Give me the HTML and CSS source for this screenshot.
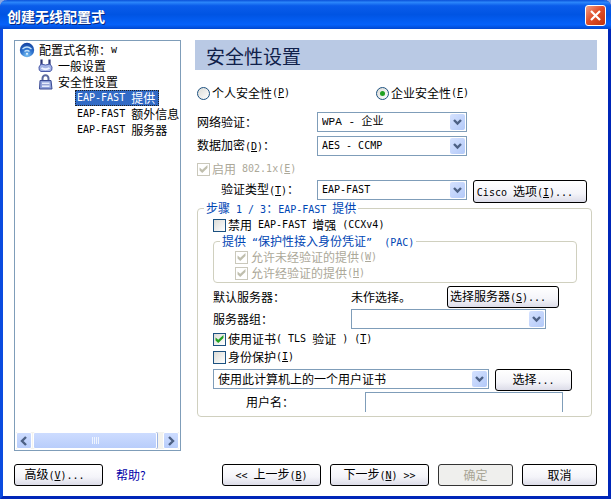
FILE: index.html
```html
<!DOCTYPE html>
<html lang="zh-CN">
<head>
  <meta charset="UTF-8">
  <meta name="viewport" content="width=device-width, initial-scale=1.0">
  <title>创建无线配置式</title>
  <link rel="stylesheet" href="styles.css">
</head>
<body>
  <svg width="0" height="0" class="defs">
    <symbol id="arrow-down" viewBox="0 0 15 16">
      <path d="M4 6l3.500 3.500L11 6" fill="none" stroke="#4d6185" stroke-width="2.400"/>
    </symbol>
  </svg>

  <div class="window">
    <header class="titlebar">
      <h1>创建无线配置式</h1>
      <button type="button" class="close" aria-label="关闭">
        <svg width="19" height="19" viewBox="0 0 19 19"><path d="M5 5l9 9M14 5l-9 9" stroke="#fff" stroke-width="2.200"/></svg>
      </button>
    </header>

    <div class="main">
      <nav class="tree">
        <ul>
          <li>
            <a href="#profile">
              <svg width="16" height="16" viewBox="0 0 16 16">
                <defs><radialGradient id="ball" cx=".5" cy=".85" r=".8"><stop offset="0" stop-color="#7cc4f4"/><stop offset=".5" stop-color="#2f74cf"/><stop offset="1" stop-color="#1747a4"/></radialGradient></defs>
                <circle cx="8" cy="8" r="7.200" fill="url(#ball)"/>
                <path d="M3.500 7q4.500-4 9 0M5.500 9.500q2.500-2 5 0" fill="none" stroke="#c4e2fa" stroke-width="1.300"/>
                <circle cx="8" cy="11.700" r="1" fill="#e8f5ff"/>
              </svg>
              配置式名称：<span class="en">w</span>
            </a>
            <ul>
              <li>
                <a href="#general">
                  <svg width="16" height="16" viewBox="0 0 16 16">
                    <path d="M3.500 1.500v6M11.500 1.500v6" stroke="#2a3474" stroke-width="2.200"/>
                    <path d="M3 6q4.500 2 9 0l2 3q.5 4-2 4.500H3Q.5 13 1 9z" fill="#a5b4e6" stroke="#4a5aa8"/>
                    <path d="M3.500 10q4 2.500 8 0" fill="none" stroke="#eef2ff" stroke-width="2"/>
                  </svg>
                  一般设置
                </a>
              </li>
              <li>
                <a href="#security">
                  <svg width="16" height="16" viewBox="0 0 16 16">
                    <path d="M4.500 7V4.500a3 3.200 0 0 1 6 0V7" fill="none" stroke="#5a689e" stroke-width="2"/>
                    <path d="M2 6.500h11l1 8.500H1.500z" fill="#8d9fd8" stroke="#3b4b94"/>
                    <path d="M4 8.500h7.500v4.500h-7.500z" fill="#e6ecfc"/>
                    <path d="M4 10.800h7.500" stroke="#7485c4"/>
                  </svg>
                  安全性设置
                </a>
                <ul class="steps">
                  <li><a href="#step1" class="selected"><span class="en">EAP-FAST </span>提供</a></li>
                  <li><a href="#step2"><span class="en">EAP-FAST </span>额外信息</a></li>
                  <li><a href="#step3"><span class="en">EAP-FAST </span>服务器</a></li>
                </ul>
              </li>
            </ul>
          </li>
        </ul>
        <div class="scrollbar">
          <button type="button" aria-label="向左"><svg width="14" height="14" viewBox="0 0 14 14"><path d="M9 3L5 7l4 4" fill="none" stroke="#4d6185" stroke-width="2.400"/></svg></button>
          <div class="thumb"><i></i><i></i><i></i><i></i></div>
          <button type="button" aria-label="向右"><svg width="14" height="14" viewBox="0 0 14 14"><path d="M5 3l4 4-4 4" fill="none" stroke="#4d6185" stroke-width="2.400"/></svg></button>
        </div>
      </nav>

      <form class="panel" id="security">
        <h2>安全性设置</h2>
        <div class="settings">
          <div class="radios">
            <label class="check"><input type="radio" name="mode">个人安全性<span class="en">(<u>P</u>)</span></label>
            <label class="check"><input type="radio" name="mode" checked>企业安全性<span class="en">(<u>F</u>)</span></label>
          </div>
          <div class="row">
            <label for="auth">网络验证：</label>
            <div class="combo">
              <select id="auth" class="mixed"><option>WPA - 企业</option></select>
              <svg><use href="#arrow-down"/></svg>
            </div>
          </div>
          <div class="row">
            <label for="cipher">数据加密<span class="en">(<u>D</u>)</span>：</label>
            <div class="combo">
              <select id="cipher" class="latin"><option>AES - CCMP</option></select>
              <svg><use href="#arrow-down"/></svg>
            </div>
          </div>
          <label class="check disabled enable"><input type="checkbox" checked disabled>启用<span class="en"> 802.1x(<u>E</u>)</span></label>
          <div class="row">
            <label for="eap" class="indent">验证类型<span class="en">(<u>T</u>)</span>：</label>
            <div class="combo">
              <select id="eap" class="latin"><option>EAP-FAST</option></select>
              <svg><use href="#arrow-down"/></svg>
            </div>
            <button type="button" class="btn cisco"><span class="en">Cisco </span>选项<span class="en">(<u>I</u>)...</span></button>
          </div>

          <fieldset class="step">
            <legend>步骤<span class="en"> 1 / 3</span>：<span class="en">EAP-FAST </span>提供</legend>
            <label class="check"><input type="checkbox">禁用<span class="en"> EAP-FAST </span>增强<span class="en"> (CCXv4)</span></label>
            <fieldset class="pac">
              <legend>提供<span class="en"> “</span>保护性接入身份凭证<span class="en">”  (PAC)</span></legend>
              <label class="check disabled"><input type="checkbox" checked disabled>允许未经验证的提供<span class="en">(<u>W</u>)</span></label>
              <label class="check disabled"><input type="checkbox" checked disabled>允许经验证的提供<span class="en">(<u>H</u>)</span></label>
            </fieldset>
            <div class="server">
              <span>默认服务器：</span>
              <span>未作选择。</span>
              <button type="button" class="btn">选择服务器<span class="en">(<u>S</u>)...</span></button>
            </div>
            <div class="server group">
              <label for="group">服务器组：</label>
              <div class="combo">
                <select id="group"><option></option></select>
                <svg><use href="#arrow-down"/></svg>
              </div>
            </div>
            <label class="check cert"><input type="checkbox" checked>使用证书<span class="en">( TLS </span>验证<span class="en"> ) (<u>T</u>)</span></label>
            <label class="check cert"><input type="checkbox">身份保护<span class="en">(<u>I</u>)</span></label>
            <div class="usercert">
              <div class="combo">
                <select aria-label="证书"><option>使用此计算机上的一个用户证书</option></select>
                <svg><use href="#arrow-down"/></svg>
              </div>
              <button type="button" class="btn">选择<span class="en">...</span></button>
            </div>
            <div class="username">
              <label for="user">用户名：</label>
              <input type="text" id="user">
            </div>
          </fieldset>
        </div>
      </form>
    </div>

    <footer>
      <button type="button" class="btn advanced">高级<span class="en">(<u>V</u>)...</span></button>
      <a href="#help" class="help">帮助?</a>
      <button type="button" class="btn wide"><span class="en">&lt;&lt; </span>上一步<span class="en">(<u>B</u>)</span></button>
      <button type="button" class="btn wide">下一步<span class="en">(<u>N</u>) &gt;&gt;</span></button>
      <button type="button" class="btn" disabled>确定</button>
      <button type="button" class="btn">取消</button>
    </footer>
  </div>
</body>
</html>
```
FILE: styles.css
```css
* {
  box-sizing: border-box;
}
body {
  margin: 0;
  background-color: #8aa6e0;
  font-family: "Noto Sans CJK SC", sans-serif;
  font-size: 12px;
  line-height: 14px;
  color: #000;
}
.defs {
  position: absolute;
}
button, input, select {
  font: inherit;
  color: inherit;
  margin: 0;
  padding: 0;
}
/* half-width characters, 6px each */
.en {
  font-family: "DejaVu Sans Mono", monospace;
  font-size: 10px;
  white-space: pre;
}
u {
  text-underline-offset: 1px;
}

.window {
  display: flex;
  flex-direction: column;
  min-height: 100vh;
  background-color: #fff;
  border: 3px solid #0026b8;
  border-left-color: #0b4be0;
  border-top: 0;
  border-radius: 7px 7px 0 0;
}
.titlebar {
  display: flex;
  align-items: center;
  justify-content: space-between;
  height: 29px;
  margin: 0 -3px;
  padding: 2px 5px 0 7px;
  border-radius: 7px 7px 0 0;
  background: linear-gradient(#0a50d8 0%, #2b86fa 8%, #0a5cea 20%, #0054e3 50%, #0562fa 85%, #0148d0 100%);
}
.titlebar h1 {
  margin: 0;
  font-size: 14px;
  line-height: 20px;
  color: #fff;
  text-shadow: 1px 1px #0a2a80;
}
.close {
  width: 21px;
  height: 21px;
  border: 1px solid #fff;
  border-radius: 3px;
  background: linear-gradient(135deg, #f0a088, #e0502c 45%, #c0330c);
}
.close svg {
  display: block;
}

.main {
  display: flex;
  flex: 1;
  gap: 14px;
  padding: 11px 11px 0;
}
.tree {
  display: flex;
  flex-direction: column;
  flex: 0 0 167px;
  border: 1px solid #7f9db9;
  padding: 1px;
  overflow: hidden;
}
.tree ul {
  list-style: none;
  margin: 0;
  padding: 0;
}
.tree > ul {
  flex: 1;
  padding-left: 3px;
}
.tree ul ul {
  padding-left: 19px;
}
.tree ul .steps {
  padding-left: 38px;
}
.steps li {
  margin-left: -1px;
}
.tree a {
  display: flex;
  align-items: center;
  width: max-content;
  height: 16px;
  color: #000;
  text-decoration: none;
}
.tree svg {
  margin-right: 4px;
}
.steps a {
  padding: 0 2px;
}
.tree .selected {
  padding-right: 4px;
  background-color: #316ac5;
  color: #fff;
  outline: 1px dotted #222;
  outline-offset: -1px;
}
.scrollbar {
  display: flex;
  gap: 1px;
  height: 17px;
  background-color: #f4f3ee;
}
.scrollbar button, .thumb {
  border: 1px solid #fff;
  border-radius: 2px;
  background: linear-gradient(#cddcff, #b8cdfb);
}
.scrollbar button {
  width: 16px;
}
.scrollbar svg {
  display: block;
}
.thumb {
  display: flex;
  flex: 1;
  align-items: center;
  justify-content: center;
  gap: 1px;
  margin-right: 5px;
  box-shadow: 1px 0 #9db5e4;
}
.thumb i {
  width: 1px;
  height: 7px;
  background-color: #eef4fe;
}

.panel {
  flex: 1;
}
.panel h2 {
  margin: 0;
  padding-left: 11px;
  height: 30px;
  background-color: #b9c9e4;
  font-size: 19px;
  font-weight: normal;
  line-height: 32px;
  color: #10204a;
}
.settings {
  padding: 16px 5px 0 2px;
}
.radios {
  display: grid;
  grid-template-columns: 179px 1fr;
  margin-bottom: 12px;
}
.check {
  display: flex;
  align-items: center;
  height: 14px;
}
.check input {
  appearance: none;
  display: flex;
  align-items: center;
  justify-content: center;
  width: 13px;
  height: 13px;
  margin-right: 2px;
  border: 1px solid #1c5180;
  background: linear-gradient(135deg, #dcdcd7, #fff);
}
.check input[type="radio"] {
  border-radius: 50%;
}
.check input[type="radio"]:checked::before {
  content: "";
  width: 5px;
  height: 5px;
  border-radius: 50%;
  background-color: #21a121;
}
.check input[type="checkbox"]:checked::before {
  content: "";
  width: 9px;
  height: 8px;
  background-color: #21a121;
  clip-path: polygon(6% 30%, 36% 60%, 94% 0, 94% 38%, 36% 100%, 6% 70%);
}
.check input:disabled {
  border-color: #cac8bb;
  background: #fff;
}
.check input[type="checkbox"]:disabled::before {
  background-color: #c0bfae;
}
.disabled {
  color: #aca899;
}
.row {
  display: flex;
  align-items: center;
  height: 20px;
  margin-bottom: 4px;
}
.row label {
  width: 120px;
}
.row .indent {
  padding-left: 24px;
}
.row .combo {
  width: 150px;
}
.enable {
  margin: 6px 0 4px;
}
.row:has(.cisco) {
  margin-bottom: 1px;
}
.combo {
  position: relative;
  height: 20px;
}
.combo select {
  appearance: none;
  display: block;
  width: 100%;
  height: 20px;
  padding: 0 20px 0 4px;
  border: 1px solid #7f9db9;
  border-radius: 0;
  background-color: #fff;
}
.combo .latin {
  font-family: "DejaVu Sans Mono", monospace;
  font-size: 10px;
}
.combo .mixed {
  font-family: "Liberation Mono", "Noto Sans CJK SC", monospace;
  font-size: 11px;
}
.combo svg {
  position: absolute;
  top: 2px;
  right: 2px;
  width: 15px;
  height: 16px;
  border-radius: 2px;
  background: linear-gradient(135deg, #d5e2ff, #b3c9f8);
  pointer-events: none;
}
.btn {
  width: 75px;
  height: 22px;
  border: 1px solid #000;
  border-radius: 3px;
  background: linear-gradient(#fff, #f4f4f9 60%, #dcdce8);
  white-space: nowrap;
}
.btn:disabled {
  border-color: #333;
  background: #efefed;
  color: #a8a596;
}
.cisco {
  align-self: flex-start;
  width: 114px;
  height: 23px;
  margin-left: 6px;
  padding-right: 10px;
}

fieldset {
  margin: 0;
  border: 1px solid #d0d0bf;
  border-radius: 4px;
}
legend {
  padding: 0 2px;
  height: 14px;
  color: #0046b4;
}
.step {
  padding: 3px 14px 4px 15px;
}
.step > legend {
  margin-left: -9px;
}
.pac {
  margin-top: 2px;
  padding: 2px 0 2px 21px;
}
.pac > legend {
  margin-left: -15px;
}
.pac .check + .check {
  margin-top: 2px;
}
.pac .check input {
  margin-right: 3px;
}
.server {
  display: grid;
  grid-template-columns: 138px 96px 112px;
  align-items: center;
  height: 22px;
  margin-top: 3px;
}
.server .btn {
  width: 112px;
  padding-right: 10px;
}
.group {
  grid-template-columns: 138px 195px;
  height: 20px;
  margin-top: 1px;
}
.cert {
  margin-top: 3px;
}
.cert + .cert {
  margin-top: 4px;
}
.usercert {
  display: flex;
  gap: 6px;
  height: 20px;
  margin-top: 5px;
}
.usercert .combo {
  width: 276px;
}
.usercert .btn {
  width: 77px;
}
.username {
  display: flex;
  align-items: center;
  margin-top: 3px;
  padding-left: 33px;
}
.username label {
  width: 119px;
}
.username input {
  width: 198px;
  height: 20px;
  padding: 0 4px;
  border: 1px solid #7f9db9;
  border-bottom: 0;
}

footer {
  display: flex;
  align-items: center;
  gap: 9px;
  padding: 13px 11px 10px;
}
.advanced {
  width: 89px;
  padding-right: 8px;
}
.help {
  margin: 0 auto 0 4px;
  color: #0000a8;
  text-decoration: none;
}
.wide {
  width: 99px;
}
```
